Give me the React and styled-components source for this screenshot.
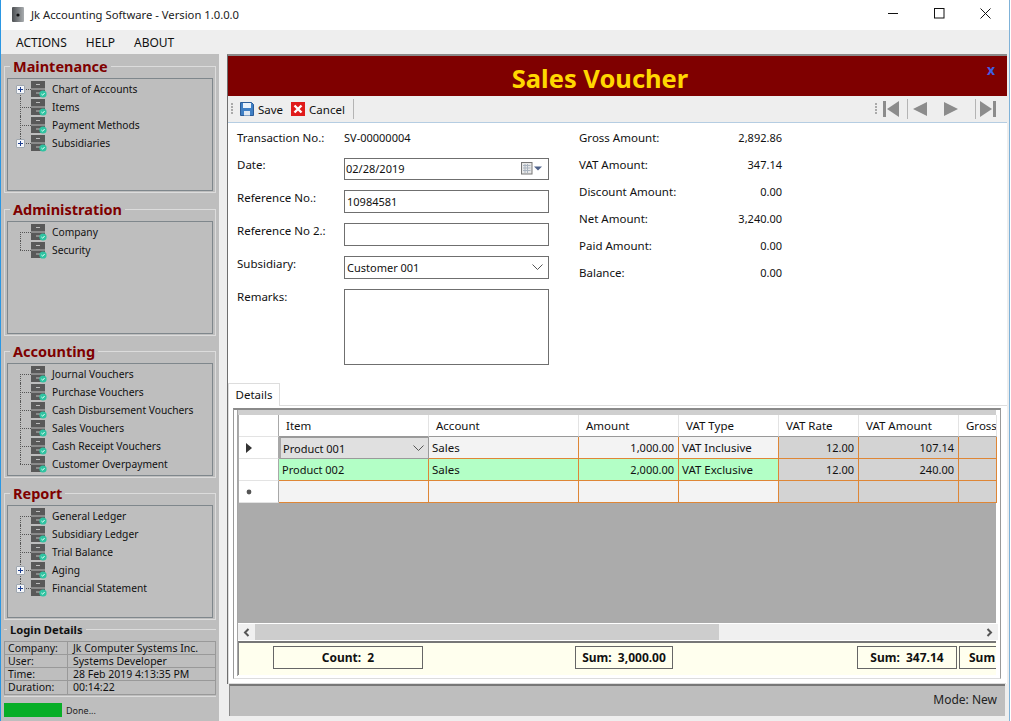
import React from "react";
import styled, { createGlobalStyle } from "styled-components";

const Global = createGlobalStyle`
  html, body { margin: 0; padding: 0; background: #fff; overflow: hidden; }
  * { box-sizing: border-box; }
  body { font-family: "Noto Sans", "Open Sans", sans-serif; font-size: 11.5px; color: #111; }
`;

const Win = styled.div`
  width: 1010px; height: 721px; display: flex; flex-direction: column;
  border-left: 1px solid #2b97e3; border-right: 1px solid #7fb2d8; background: #fff; overflow: hidden;
`;
const TitleBar = styled.div`
  height: 30px; flex: none; display: flex; align-items: center; padding: 0 0 1px 10px; background: #fff;
`;
const TitleText = styled.div`
  margin-left: 6px; font-size: 11.25px; color: #222; flex: 1; white-space: nowrap;
`;
const WinButtons = styled.div`
  display: flex; align-items: center; padding: 0 18px 2px 0; gap: 35px;
`;
const MenuBar = styled.div`
  height: 24px; flex: none; background: #eeeeee; display: flex; align-items: center; padding-left: 15px; gap: 19px; font-size: 12px; color: #111;
`;
const Body = styled.div`
  flex: 1; min-height: 0; display: flex; background: #eeeeee;
`;
const Side = styled.aside`
  width: 218px; flex: none; background: #bebebe; display: flex; flex-direction: column; padding: 3px 3px 0 3px;
`;
const Group = styled.fieldset`
  margin: 0 0 ${p => p.$mb}px; padding: 0 2px; height: 136px; border: 1px solid #dcdcdc; min-width: 0; flex: none;
`;
const Legend = styled.legend`
  margin-left: 3px; padding: 0 3px; font-size: 14.5px; line-height: 19px; font-weight: 700; color: #7f0000;
`;
const TreeBox = styled.div`
  height: 113px; border: 1px solid #7f878c; padding-top: 1px; margin-top: 2px;
`;
const TreeRow = styled.div`
  position: relative; height: 18px; display: flex; align-items: center; padding-left: 23px;
  &::before {
    content: ""; position: absolute; left: 12px;
    top: ${p => (p.$first ? "9px" : "0")}; bottom: ${p => (p.$last ? "9px" : "0")};
    border-left: 1px dotted #555;
  }
  &::after {
    content: ""; position: absolute; left: 12px; top: 9px; width: 11px; border-top: 1px dotted #555;
  }
`;
const Expander = styled.span`
  position: absolute; z-index: 1; left: 8px; top: 5px; width: 9px; height: 9px; background: #f4f6fa; border: 1px solid #a0a8b0; border-radius: 1px;
  &::before { content: ""; position: absolute; left: 1px; right: 1px; top: 3px; height: 1px; background: #1f3f8f; }
  &::after { content: ""; position: absolute; top: 1px; bottom: 1px; left: 3px; width: 1px; background: #1f3f8f; }
`;
const TreeLabel = styled.span`
  margin-left: 5px; white-space: nowrap; color: #111; font-size: 10.25px;
`;
const LoginGroup = styled.fieldset`
  margin: 2px 0 0; padding: 0; height: 75px; border: 0; border-top: 1px solid #dcdcdc; border-bottom: 1px solid #dcdcdc; min-width: 0; flex: none;
`;
const LoginLegend = styled.legend`
  margin-left: 3px; padding: 0 3px; font-size: 11.2px; line-height: 15px; font-weight: 700; color: #111;
`;
const LoginTable = styled.div`
  display: grid; grid-template-columns: 63px 1fr; grid-auto-rows: 13px; border: 1px solid #999; margin-top: 4px;
`;
const LoginCell = styled.div`
  border-bottom: 1px solid #999; border-right: ${p => (p.$key ? "1px solid #999" : "0")}; line-height: 12px; padding-left: ${p => (p.$key ? "3px" : "5px")}; font-size: 10.5px; white-space: nowrap;
  &:nth-last-child(-n+2) { border-bottom: 0; }
`;
const Progress = styled.div`
  display: flex; align-items: center; margin-top: 6px; gap: 4px; font-size: 9px; color: #222;
`;
const ProgressBar = styled.div`
  width: 58px; height: 14px; background: #08ae27; flex: none;
`;
const Work = styled.div`
  flex: 1; min-width: 0; display: flex; flex-direction: column; padding: 0 2px 5px 8px;
`;
const Panel = styled.main`
  flex: 1; min-height: 0; display: flex; flex-direction: column; background: #fff; border-left: 1px solid #6e6e6e; border-top: 2px solid #8a8a8a;
`;
const Banner = styled.header`
  position: relative; height: 40px; flex: none; background: #7f0000; color: #ffd700; font-size: 25.5px; font-weight: 700; display: flex; align-items: center; justify-content: center; padding: 3px 35px 0 0;
`;
const CloseX = styled.span`
  position: absolute; right: 12px; top: 6px; color: #3f5fe0; font-size: 14px; font-weight: 700; line-height: 16px;
`;
const Toolbar = styled.div`
  height: 27px; flex: none; background: #eeeeee; border-bottom: 1px solid #b5cde2; display: flex; align-items: center; padding-left: 3px; position: relative;
`;
const Grip = styled.span`
  width: 2px; height: 12px; flex: none; margin-right: ${p => p.$mr || 0}px; background: repeating-linear-gradient(to bottom, #aaa 0 2px, transparent 2px 3px);
`;
const ToolBtn = styled.span`
  display: inline-flex; align-items: center; gap: 4px; margin-left: ${p => p.$ml || 0}px; font-size: 11.5px; color: #111;
`;
const ToolSep = styled.span`
  width: 1px; height: 20px; flex: none; background: #b4b4b4; margin-left: ${p => p.$ml || 0}px; margin-right: ${p => p.$mr || 0}px;
`;
const Spacer = styled.span`flex: 1;`;
const NavGap = styled.span`
  flex: none; width: ${p => p.$w}px;
`;
const FormArea = styled.section`
  height: 259px; flex: none; display: flex; padding: 5px 0 0 9px;
`;
const LeftForm = styled.div`
  width: 321px; display: grid; grid-template-columns: 107px 205px; grid-template-rows: 20px 22px 23px 23px 23px 76px; row-gap: 10px; align-items: start; flex: none;
`;
const RightForm = styled.div`
  margin-left: 21px; width: 203px; display: grid; grid-template-columns: 1fr auto; grid-auto-rows: 27px; flex: none;
`;
const FieldLabel = styled.div`
  padding-top: ${p => p.$pt ?? 0}px; margin-top: ${p => p.$mt ?? 0}px; line-height: 16px; white-space: nowrap;
`;
const Code = styled(FieldLabel)`
  font-size: 11px;
`;
const Amount = styled.div`
  text-align: right; line-height: 20px; font-size: 11px;
`;
const Input = styled.div`
  height: ${p => p.$h || 23}px; border: 1px solid #6f6f6f; background: #fff; display: flex; align-items: center; padding: 0 5px 1px ${p => p.$pl ?? 1}px; font-size: 11px; justify-content: space-between; color: #111;
`;
const TabStrip = styled.div`
  height: 24px; flex: none; display: flex; align-items: flex-end; border-bottom: 1px solid #dddddd;
`;
const Tab = styled.div`
  width: 52px; height: 23px; background: #fff; border: 1px solid #dddddd; border-bottom: 0; display: flex; align-items: center; justify-content: center; font-size: 11.5px;
  margin-bottom: -1px; padding-bottom: 2px;
`;
const TabPage = styled.div`
  flex: 1; min-height: 0; padding: 2px 2px 4px 4px; border-left: 1px solid #dddddd; border-bottom: 1px solid #dddddd; margin-right: 1px;
`;
const Frame = styled.div`
  height: 100%; border-left: 1px solid #9a9a9a; border-top: 2px solid #8a8a8a; border-right: 1px solid #9a9a9a; border-bottom: 1px solid #dddddd; padding: 0 0 2px 3px; display: flex; flex-direction: column; margin-right: 3px;
`;
const InnerFrame = styled.div`
  flex: 1; min-height: 0; display: flex; flex-direction: column; border-left: 1px solid #a5a5a5; overflow: hidden; padding-right: 4px;
`;
const DataGrid = styled.div`
  height: 213px; flex: none; background: #ababab; border-top: 5px solid #cfcfcf;
`;
const GridRow = styled.div`
  display: grid; grid-template-columns: 40px 150px 150px 100px 100px 80px 100px 38px; height: ${p => p.$h || 22}px; width: 758px; margin-left: 1px;
`;
const HeadCell = styled.div`
  background: #fff; border-right: 1px solid #e3e3e3; border-bottom: 1px solid #999; padding-left: 7px; display: flex; align-items: center; font-size: 11.5px; white-space: nowrap; overflow: hidden;
`;
const RowHead = styled.div`
  background: #fff; border-bottom: 1px solid #e3e3e3; border-right: 1px solid #a8a8a8; display: flex; align-items: center; padding-left: 7px;
`;
const Cell = styled.div`
  background: ${p => p.$bg || "#f3f3f3"}; border-right: 1px solid #de8636; border-bottom: 1px solid #de8636; display: flex; align-items: center; justify-content: ${p => (p.$right ? "flex-end" : "space-between")}; padding: 0 4px 0 3px; font-size: ${p => (p.$right || p.$name ? "11px" : "11.5px")}; white-space: nowrap; overflow: hidden;
`;
const ComboCell = styled(Cell)`
  background: #e0e0e0; border: 1px solid #9a9a9a; border-left: 2px solid #a8a8a8; padding: 0 4px 0 2px;
`;
const Scrollbar = styled.div`
  height: 17px; flex: none; width: 760px; background: #f0f0f0; display: flex; align-items: center; border-top: 1px solid #fff; justify-content: space-between;
`;
const ScrollThumb = styled.div`
  width: 464px; height: 16px; background: #cdcdcd;
`;
const ScrollArrow = styled.span`
  width: 17px; height: 16px; display: flex; align-items: center; justify-content: center; flex: none;
`;
const FooterBar = styled.div`
  flex: none; width: 758px; height: 34px; margin-top: 1px; background: #ffffee; border-top: 2px solid #777; border-left: 1px solid #888; display: grid; grid-template-columns: 34px 150px 152px 98px 184px 100px 2px 60px; align-items: start; padding-top: 3px; overflow: hidden;
`;
const SumBox = styled.div`
  grid-column: ${p => p.$col}; height: 23px; border: 1px solid #666; display: flex; align-items: center; justify-content: ${p => (p.$clip ? "flex-start" : "center")}; padding-left: ${p => (p.$clip ? "9px" : "0")}; font-weight: 700; font-size: 12px; white-space: pre; color: #111; overflow: hidden;
`;
const StatusBar = styled.footer`
  height: 32px; flex: none; margin: 0 2px; background: #bebebe; border-top: 2px solid #777; border-left: 1px solid #8a8a8a; display: flex; align-items: center; justify-content: flex-end; padding: 0 8px 3px 0; font-size: 12px; color: #222;
`;
const PanelWrap = styled.div`
  flex: 1; min-height: 0; display: flex; flex-direction: column;
`;

const WinIcon = () => (
  <svg width="14" height="16" viewBox="0 0 14 16">
    <defs><linearGradient id="wi" x1="0" x2="1"><stop offset="0" stopColor="#4c4f52" /><stop offset="1" stopColor="#a9adb0" /></linearGradient></defs>
    <rect x="1" y="0" width="12" height="15" rx="1" fill="url(#wi)" />
    <circle cx="7" cy="8" r="1.6" fill="#111" />
  </svg>
);
const WinMin = () => (<svg width="11" height="11" viewBox="0 0 11 11"><path d="M0 5.5h10" stroke="#111" /></svg>);
const WinMax = () => (<svg width="11" height="11" viewBox="0 0 11 11"><rect x=".5" y=".5" width="9.5" height="9.5" fill="none" stroke="#111" /></svg>);
const WinClose = () => (<svg width="11" height="11" viewBox="0 0 11 11"><path d="M.5.5l10 10M10.5.5l-10 10" stroke="#111" /></svg>);

const ServerIcon = () => (
  <svg width="16" height="17" viewBox="0 0 16 17" style={{ flex: "none" }}>
    <rect x="0" y="0" width="14" height="7.5" fill="#595959" />
    <rect x="0" y="8.5" width="14" height="7.5" fill="#595959" />
    <path d="M5 3.5h4M5 12h4" stroke="#bdbdbd" />
    <circle cx="12" cy="13" r="3.6" fill="#2fc3a1" />
    <path d="M10.4 13l1.2 1.2 2-2.2" stroke="#eafff8" fill="none" />
  </svg>
);
const SaveIcon = () => (
  <svg width="14" height="14" viewBox="0 0 14 14">
    <path d="M.5.5h11l2 2v11H.5z" fill="#3f7fc4" stroke="#2a5c99" />
    <rect x="3" y="1" width="8" height="5" fill="#eaf2fb" />
    <rect x="4" y="9" width="6" height="4.5" fill="#dfe8f2" />
  </svg>
);
const CancelIcon = () => (
  <svg width="14" height="14" viewBox="0 0 14 14">
    <rect width="14" height="14" fill="#e01b1b" />
    <path d="M3.5 3.5l7 7M10.5 3.5l-7 7" stroke="#fff" strokeWidth="2.4" />
  </svg>
);
const NavIcon = ({ d, w = 16 }) => (<svg width={w} height="16" viewBox={`0 0 ${w} 16`} style={{ flex: "none" }}><path d={d} fill="#8c8c8c" /></svg>);
const CalIcon = () => (
  <svg width="22" height="13" viewBox="0 0 22 13">
    <rect x=".5" y=".5" width="10.5" height="11.5" fill="#e8e8e8" stroke="#777" />
    <path d="M2 3.5h7.5M2 6h7.5M2 8.5h7.5M4 2v9M6.5 2v9" stroke="#aab4c0" />
    <path d="M13 4.5h8l-4 4z" fill="#4f628a" />
  </svg>
);
const Chevron = ({ w = 11 }) => (<svg width={w} height="6" viewBox="0 0 11 6"><path d="M.5.5l5 5 5-5" fill="none" stroke="#555" /></svg>);

const Tree = ({ items }) => (
  <TreeBox>
    {items.map((it, i) => (
      <TreeRow key={it.t} $first={i === 0} $last={i === items.length - 1}>
        {it.x && <Expander />}
        <ServerIcon />
        <TreeLabel>{it.t}</TreeLabel>
      </TreeRow>
    ))}
  </TreeBox>
);

const groups = [
  ["Maintenance", 7, [{ t: "Chart of Accounts", x: 1 }, { t: "Items" }, { t: "Payment Methods" }, { t: "Subsidiaries", x: 1 }]],
  ["Administration", 6, [{ t: "Company" }, { t: "Security" }]],
  ["Accounting", 6, [{ t: "Journal Vouchers" }, { t: "Purchase Vouchers" }, { t: "Cash Disbursement Vouchers" }, { t: "Sales Vouchers" }, { t: "Cash Receipt Vouchers" }, { t: "Customer Overpayment" }]],
  ["Report", 0, [{ t: "General Ledger" }, { t: "Subsidiary Ledger" }, { t: "Trial Balance" }, { t: "Aging", x: 1 }, { t: "Financial Statement", x: 1 }]],
];
const login = [["Company:", "Jk Computer Systems Inc."], ["User:", "Systems Developer"], ["Time:", "28 Feb 2019 4:13:35 PM"], ["Duration:", "00:14:22"]];
const totals = [["Gross Amount:", "2,892.86"], ["VAT Amount:", "347.14"], ["Discount Amount:", "0.00"], ["Net Amount:", "3,240.00"], ["Paid Amount:", "0.00"], ["Balance:", "0.00"]];
const heads = ["Item", "Account", "Amount", "VAT Type", "VAT Rate", "VAT Amount", "Gross"];
const RO = "#d3d3d3";
const GREEN = "#b3ffc6";

export default function App() {
  return (
    <>
      <Global />
      <Win>
        <TitleBar>
          <WinIcon />
          <TitleText>Jk Accounting Software - Version 1.0.0.0</TitleText>
          <WinButtons>
            <WinMin />
            <WinMax />
            <WinClose />
          </WinButtons>
        </TitleBar>
        <MenuBar>
          <span>ACTIONS</span><span>HELP</span><span>ABOUT</span>
        </MenuBar>
        <Body>
          <Side>
            {groups.map(([name, mb, items]) => (
              <Group key={name} $mb={mb}>
                <Legend>{name}</Legend>
                <Tree items={items} />
              </Group>
            ))}
            <LoginGroup>
              <LoginLegend>Login Details</LoginLegend>
              <LoginTable>
                {login.map(([k, v]) => (
                  <React.Fragment key={k}>
                    <LoginCell $key>{k}</LoginCell>
                    <LoginCell>{v}</LoginCell>
                  </React.Fragment>
                ))}
              </LoginTable>
            </LoginGroup>
            <Progress><ProgressBar /><span>Done...</span></Progress>
          </Side>
          <Work>
            <PanelWrap>
              <Panel>
                <Banner>
                  Sales Voucher
                  <CloseX>x</CloseX>
                </Banner>
                <Toolbar>
                  <Grip />
                  <ToolBtn $ml={7}><SaveIcon />Save</ToolBtn>
                  <ToolBtn $ml={8}><CancelIcon />Cancel</ToolBtn>
                  <ToolSep $ml={8} />
                  <Spacer />
                  <Grip $mr={6} />
                  <NavIcon d="M0 0h3v16H0zM16 0v16L4 8z" w={16} />
                  <ToolSep $ml={8} $mr={5} />
                  <NavIcon d="M14 1v14L0 8z" w={14} />
                  <NavGap $w={17} />
                  <NavIcon d="M0 1v14l14-7z" w={14} />
                  <ToolSep $ml={17} $mr={4} />
                  <NavIcon d="M0 0v16l12-8zM13 0h3v16h-3z" w={16} />
                  <NavGap $w={11} />
                </Toolbar>
                <FormArea>
                  <LeftForm>
                    <FieldLabel $pt={2}>Transaction No.:</FieldLabel>
                    <Code $pt={2}>SV-00000004</Code>
                    <FieldLabel $mt={-1}>Date:</FieldLabel>
                    <Input $h={22}>02/28/2019<CalIcon /></Input>
                    <FieldLabel>Reference No.:</FieldLabel>
                    <Input $pl={2}>10984581</Input>
                    <FieldLabel>Reference No 2.:</FieldLabel>
                    <Input />
                    <FieldLabel>Subsidiary:</FieldLabel>
                    <Input $pl={2}>Customer 001<Chevron /></Input>
                    <FieldLabel>Remarks:</FieldLabel>
                    <Input $h={76} />
                  </LeftForm>
                  <RightForm>
                    {totals.map(([k, v]) => (
                      <React.Fragment key={k}>
                        <FieldLabel $pt={2}>{k}</FieldLabel>
                        <Amount>{v}</Amount>
                      </React.Fragment>
                    ))}
                  </RightForm>
                </FormArea>
                <TabStrip><Tab>Details</Tab></TabStrip>
                <TabPage>
                  <Frame>
                    <InnerFrame>
                      <DataGrid>
                        <GridRow>
                          <RowHead />
                          {heads.map(h => <HeadCell key={h}>{h}</HeadCell>)}
                        </GridRow>
                        <GridRow>
                          <RowHead>
                            <svg width="6" height="10" viewBox="0 0 6 10"><path d="M0 0l6 5-6 5z" fill="#333" /></svg>
                          </RowHead>
                          <ComboCell $name>Product 001<Chevron /></ComboCell>
                          <Cell>Sales</Cell>
                          <Cell $right>1,000.00</Cell>
                          <Cell>VAT Inclusive</Cell>
                          <Cell $right $bg={RO}>12.00</Cell>
                          <Cell $right $bg={RO}>107.14</Cell>
                          <Cell $bg={RO} />
                        </GridRow>
                        <GridRow>
                          <RowHead />
                          <Cell $name $bg={GREEN}>Product 002</Cell>
                          <Cell $bg={GREEN}>Sales</Cell>
                          <Cell $right $bg={GREEN}>2,000.00</Cell>
                          <Cell $bg={GREEN}>VAT Exclusive</Cell>
                          <Cell $right $bg={RO}>12.00</Cell>
                          <Cell $right $bg={RO}>240.00</Cell>
                          <Cell $bg={RO} />
                        </GridRow>
                        <GridRow>
                          <RowHead>
                            <svg width="6" height="6" viewBox="0 0 6 6"><circle cx="3" cy="3" r="2.4" fill="#555" /></svg>
                          </RowHead>
                          <Cell />
                          <Cell />
                          <Cell />
                          <Cell />
                          <Cell $bg={RO} />
                          <Cell $bg={RO} />
                          <Cell $bg={RO} />
                        </GridRow>
                      </DataGrid>
                      <Scrollbar>
                        <ScrollArrow>
                          <svg width="7" height="9" viewBox="0 0 7 9"><path d="M5.5 1L2 4.5 5.5 8" fill="none" stroke="#555" strokeWidth="2" /></svg>
                        </ScrollArrow>
                        <ScrollThumb />
                        <Spacer />
                        <ScrollArrow>
                          <svg width="7" height="9" viewBox="0 0 7 9"><path d="M1.5 1L5 4.5 1.5 8" fill="none" stroke="#555" strokeWidth="2" /></svg>
                        </ScrollArrow>
                      </Scrollbar>
                      <FooterBar>
                        <SumBox $col={2}>Count:  2</SumBox>
                        <SumBox $col={4}>Sum:  3,000.00</SumBox>
                        <SumBox $col={6}>Sum:  347.14</SumBox>
                        <SumBox $col={8} $clip>Sum</SumBox>
                      </FooterBar>
                    </InnerFrame>
                  </Frame>
                </TabPage>
              </Panel>
              <StatusBar>Mode: New</StatusBar>
            </PanelWrap>
          </Work>
        </Body>
      </Win>
    </>
  );
}
